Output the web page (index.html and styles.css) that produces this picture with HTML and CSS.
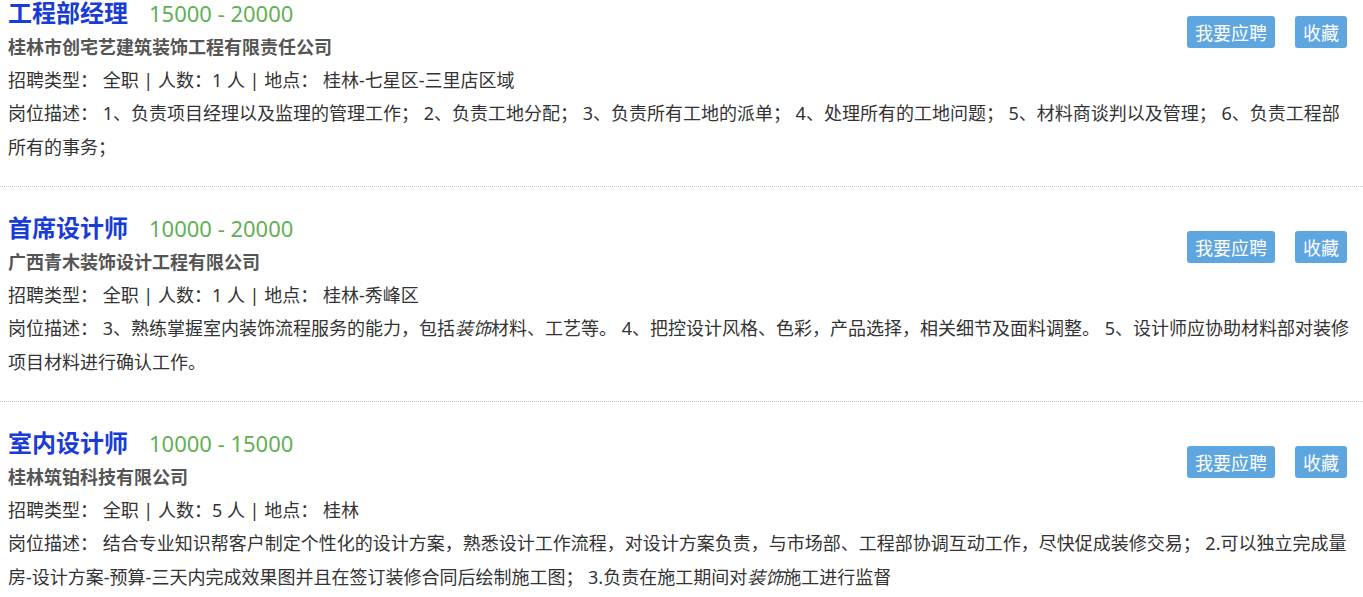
FILE: index.html
```html
<!DOCTYPE html>
<html lang="zh-CN">
<head>
    <meta charset="UTF-8">
    <meta name="viewport" content="width=device-width, initial-scale=1.0">
    <title>招聘信息</title>
    <link rel="stylesheet" href="styles.css">
</head>
<body>
    <div class="job-list">
        <div class="job-item">
            <div class="job-head">
                <div class="job-info">
                    <h3 class="job-title">工程部经理<span class="salary">15000 - 20000</span></h3>
                    <p class="company">桂林市创宅艺建筑装饰工程有限责任公司</p>
                    <p>招聘类型： 全职 | 人数：1 人 | 地点： 桂林-七星区-三里店区域</p>
                </div>
                <div class="job-actions">
                    <button class="btn">我要应聘</button>
                    <button class="btn">收藏</button>
                </div>
            </div>
            <p class="desc">岗位描述： 1、负责项目经理以及监理的管理工作； 2、负责工地分配； 3、负责所有工地的派单； 4、处理所有的工地问题； 5、材料商谈判以及管理； 6、负责工程部所有的事务；</p>
        </div>

        <div class="job-item">
            <div class="job-head">
                <div class="job-info">
                    <h3 class="job-title">首席设计师<span class="salary">10000 - 20000</span></h3>
                    <p class="company">广西青木装饰设计工程有限公司</p>
                    <p>招聘类型： 全职 | 人数：1 人 | 地点： 桂林-秀峰区</p>
                </div>
                <div class="job-actions">
                    <button class="btn">我要应聘</button>
                    <button class="btn">收藏</button>
                </div>
            </div>
            <p class="desc">岗位描述： 3、熟练掌握室内装饰流程服务的能力，包括<em>装饰</em>材料、工艺等。 4、把控设计风格、色彩，产品选择，相关细节及面料调整。 5、设计师应协助材料部对装修项目材料进行确认工作。</p>
        </div>

        <div class="job-item">
            <div class="job-head">
                <div class="job-info">
                    <h3 class="job-title">室内设计师<span class="salary">10000 - 15000</span></h3>
                    <p class="company">桂林筑铂科技有限公司</p>
                    <p>招聘类型： 全职 | 人数：5 人 | 地点： 桂林</p>
                </div>
                <div class="job-actions">
                    <button class="btn">我要应聘</button>
                    <button class="btn">收藏</button>
                </div>
            </div>
            <p class="desc">岗位描述： 结合专业知识帮客户制定个性化的设计方案，熟悉设计工作流程，对设计方案负责，与市场部、工程部协调互动工作，尽快促成装修交易； 2.可以独立完成量房-设计方案-预算-三天内完成效果图并且在签订装修合同后绘制施工图； 3.负责在施工期间对<em>装饰</em>施工进行监督</p>
        </div>
    </div>
</body>
</html>
```

FILE: styles.css
```css
body {
    margin: 0;
    font-family: "Noto Sans", "Noto Sans CJK SC", sans-serif;
    font-size: 18px;
    color: #333;
    background: #fff;
    overflow: hidden;
}

/* first card is scrolled a little past the top edge */
.job-list {
    margin-top: -28px;
}

.job-item {
    padding: 23px 8px 22px 8px;
    border-bottom: 1px dotted #c8c8c8;
}

.job-head {
    display: flex;
    justify-content: space-between;
    align-items: flex-start;
}

.job-title {
    margin: 0;
    font-size: 24px;
    line-height: 34px;
    font-weight: bold;
    color: #1a3cd6;
    font-family: "Noto Sans CJK SC", sans-serif;
}

.salary {
    margin-left: 21px;
    font-size: 22px;
    font-weight: normal;
    color: #5fb055;
    font-family: "Noto Sans", "Noto Sans CJK SC", sans-serif;
}

p {
    margin: 0;
    line-height: 33.5px;
}

.company {
    font-size: 18px;
    font-weight: bold;
    color: #555;
    font-family: "Noto Sans CJK SC", sans-serif;
}

.desc em {
    font-style: italic;
}

.job-actions {
    display: flex;
    gap: 20px;
    margin-top: 21px;
    margin-right: 8px;
}

.btn {
    height: 32px;
    padding: 0 8px;
    font-family: "Noto Sans CJK SC", sans-serif;
    font-size: 18px;
    line-height: 32px;
    color: #fff;
    background-color: #5ea6e0;
    border: none;
    border-radius: 3px;
    cursor: pointer;
}
```
